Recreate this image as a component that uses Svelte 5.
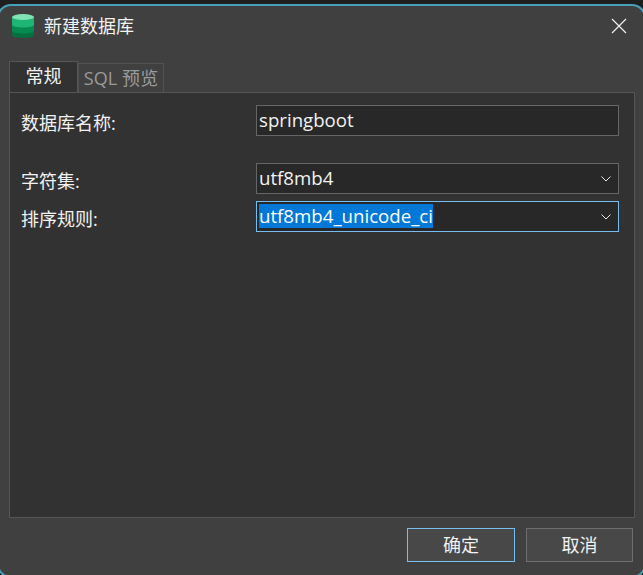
<script lang="ts">
  let activeTab = $state('general');
  let dbName = $state('springboot');
</script>

<div class="screen">
  <div class="dialog">
    <header class="titlebar">
      <svg class="logo" width="24" height="24" viewBox="0 0 24 24" aria-hidden="true">
        <path d="M1 16v5c0 1.800 5 3 11 3s11-1.200 11-3v-5z" fill="#04703f" />
        <path d="M1 10v6.500c0 1.800 5 3 11 3s11-1.200 11-3V10z" fill="#078a50" />
        <path d="M1 3v7.500c0 1.800 5 3 11 3s11-1.200 11-3V3z" fill="#1fb574" />
        <ellipse cx="12" cy="3" rx="11" ry="3" fill="#7fe3b4" />
      </svg>
      <span class="title">新建数据库</span>
      <button class="close" aria-label="关闭">
        <svg width="16" height="16" viewBox="0 0 16 16">
          <path d="M1 1l14 14M15 1L1 15" stroke="#f0f0f0" stroke-width="1.200" fill="none" />
        </svg>
      </button>
    </header>

    <div class="tabs">
      <button class="tab" class:active={activeTab === 'general'} onclick={() => (activeTab = 'general')}>常规</button>
      <button class="tab" class:active={activeTab === 'sql'} onclick={() => (activeTab = 'sql')}>SQL 预览</button>
    </div>

    <section class="panel">
      <div class="row name-row">
        <span class="label">数据库名称:</span>
        <input class="field" bind:value={dbName} />
      </div>
      <div class="row">
        <span class="label">字符集:</span>
        <div class="field select">
          <span>utf8mb4</span>
          <svg class="chev" width="10" height="6" viewBox="0 0 10 6"><path d="M.5.5L5 5 9.500.5" stroke="#e8e8e8" fill="none" /></svg>
        </div>
      </div>
      <div class="row">
        <span class="label">排序规则:</span>
        <div class="field select focused">
          <span class="selected">utf8mb4_unicode_ci</span>
          <svg class="chev" width="10" height="6" viewBox="0 0 10 6"><path d="M.5.5L5 5 9.500.5" stroke="#e8e8e8" fill="none" /></svg>
        </div>
      </div>
    </section>

    <footer class="actions">
      <button class="btn primary">确定</button>
      <button class="btn">取消</button>
    </footer>
  </div>
</div>

<style>
  :global(body) {
    margin: 0;
    background: #1f1f1f;
    overflow: hidden;
  }

  .screen {
    width: 643px;
    height: 575px;
    overflow: hidden;
    padding-top: 4px;
    box-sizing: border-box;
    font-family: "Open Sans", "Noto Sans CJK SC", sans-serif;
    font-size: 18px;
    color: #f2f2f2;
  }

  .dialog {
    width: 649px;
    height: 574px;
    margin-left: -3px;
    box-sizing: border-box;
    border: 2px solid #45a0b8;
    border-radius: 14px;
    background: #404040;
    display: flex;
    flex-direction: column;
    padding: 0 9px 0 10px;
  }

  .titlebar {
    display: flex;
    align-items: center;
    height: 40px;
    padding: 0 0 0 2px;
    flex: none;
  }

  .logo {
    margin-right: 9px;
  }

  .title {
    flex: 1;
    line-height: 1;
  }

  .close {
    background: none;
    border: 0;
    padding: 0;
    margin-right: 8px;
    height: 16px;
    line-height: 0;
  }

  .tabs {
    display: flex;
    align-items: flex-end;
    height: 31px;
    margin-top: 15px;
    flex: none;
  }

  .tab {
    font: inherit;
    line-height: 1;
    height: 29px;
    width: 86px;
    box-sizing: border-box;
    background: #404040;
    border: 1px solid #525252;
    border-bottom: 0;
    color: #9a9a9a;
    padding: 0 0 1px;
    letter-spacing: 0.1px;
  }

  .tab.active {
    width: 69px;
    height: 31px;
    background: #323232;
    color: #f2f2f2;
    border-color: #555555;
    padding-bottom: 3px;
  }

  .panel {
    height: 426px;
    box-sizing: border-box;
    background: #323232;
    border: 1px solid #555555;
    flex: none;
    padding: 12px 14px 0 11px;
    display: flex;
    flex-direction: column;
    gap: 7px;
  }

  .row {
    display: flex;
    align-items: center;
    height: 31px;
  }

  .name-row {
    margin-bottom: 20px;
  }

  .label {
    width: 235px;
    flex: none;
    line-height: 1;
    padding-top: 4px;
  }

  .field {
    width: 363px;
    height: 31px;
    box-sizing: border-box;
    background: #282828;
    border: 1px solid #666666;
    color: #f2f2f2;
    font: inherit;
    font-size: 18.67px;
    padding: 0 2px 2px;
    outline: none;
  }

  .select {
    display: flex;
    align-items: center;
    justify-content: space-between;
    padding-right: 7px;
  }

  .chev {
    margin-top: 2px;
  }

  .focused {
    border-color: #77bdf0;
  }

  .selected {
    background: #0078d7;
    color: #ffffff;
    line-height: 24px;
  }

  .actions {
    display: flex;
    justify-content: flex-end;
    gap: 11px;
    margin-top: 10px;
    padding-right: 2px;
    flex: none;
  }

  .btn {
    width: 107px;
    height: 34px;
    box-sizing: border-box;
    background: #484848;
    border: 1px solid #6e6e6e;
    color: #f2f2f2;
    font: inherit;
    line-height: 1;
    padding: 0;
  }

  .btn.primary {
    width: 108px;
    border-color: #77bdf0;
  }
</style>
